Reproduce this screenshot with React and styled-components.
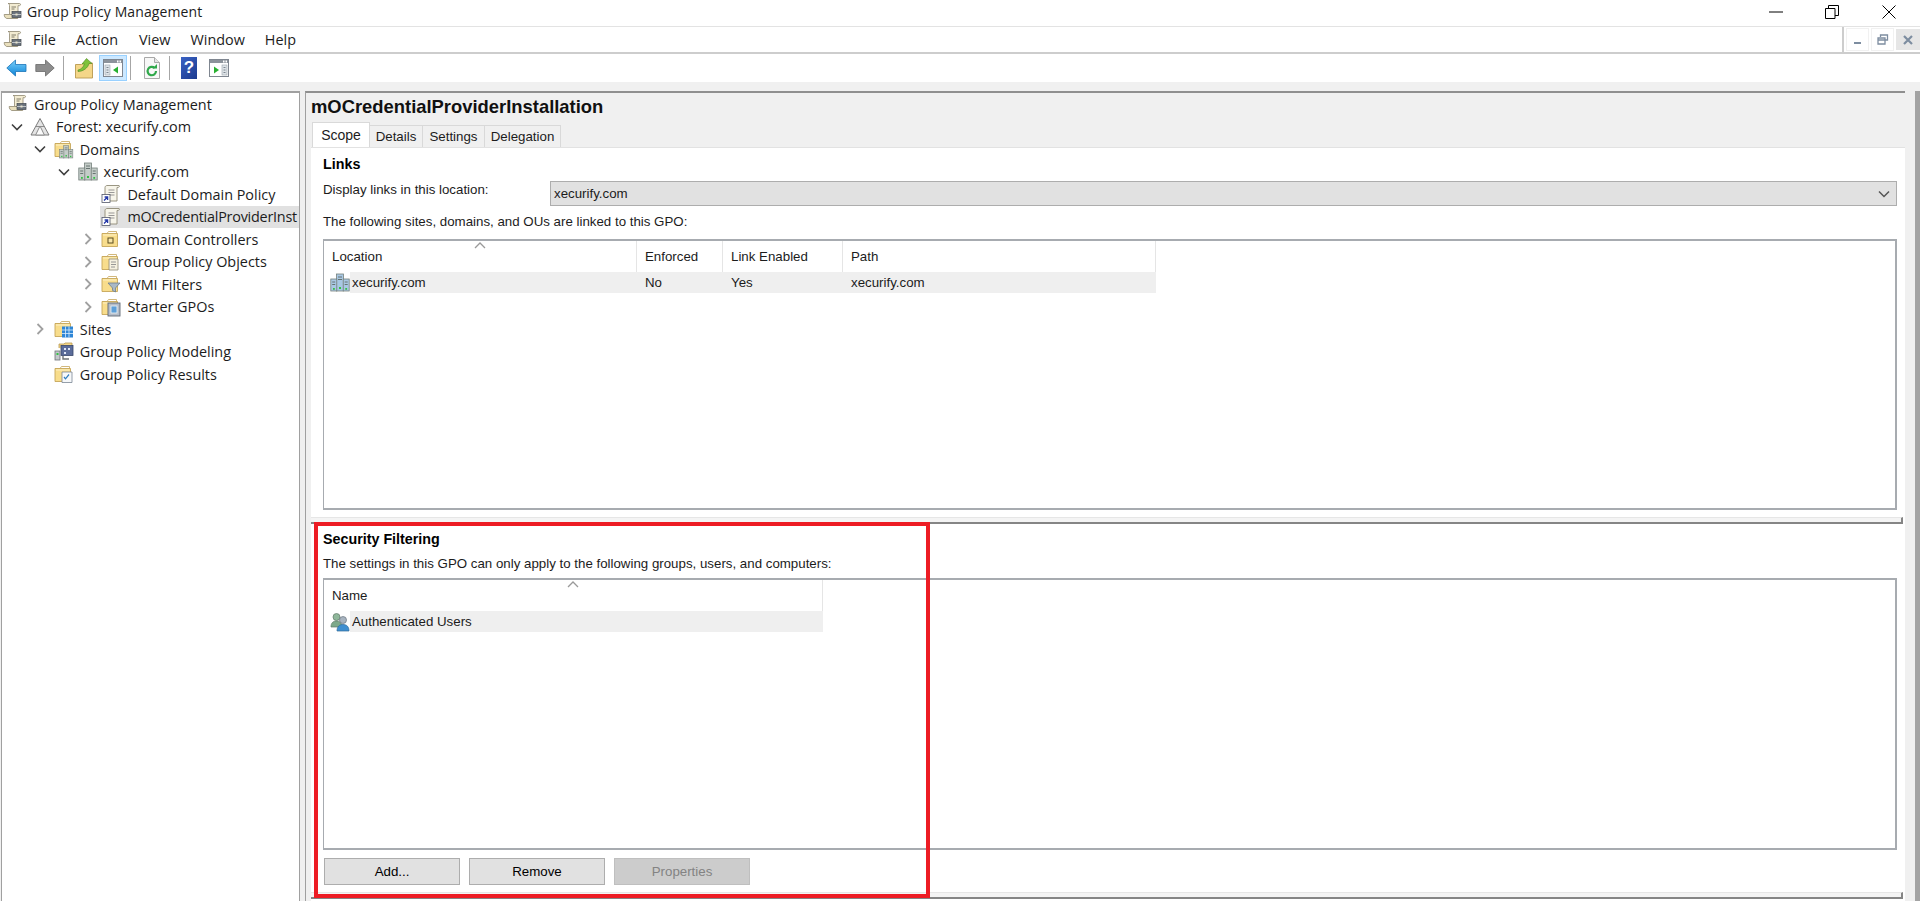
import React from "react";
import styled, { createGlobalStyle } from "styled-components";

const GlobalStyle = createGlobalStyle`
  html, body {
    margin: 0;
    padding: 0;
    height: 100%;
    overflow: hidden;
    background: #f0f0f0;
  }
`;

/* ---------- icons ---------- */

const ScrollIcon = () => (
  <svg width="20" height="20" viewBox="0 0 20 20">
    <path d="M5 1.500h11.500c1.200 0 1.500 1.800 0 2.200H15v9H6.500V3.500C6.500 2.400 6 1.500 5 1.500z" fill="#f3ecd2" stroke="#8f8870" strokeWidth="0.8" />
    <path d="M6.500 12.500H1.200c0 2 1 3.500 2.500 4h11v-4z" fill="#e9dfbc" stroke="#8f8870" strokeWidth="0.8" />
    <path d="M8.500 5h4.500M8.500 7h3" stroke="#77725f" strokeWidth="0.9" />
    <rect x="9" y="9.500" width="9" height="6" fill="#6b737c" stroke="#3f464d" strokeWidth="0.7" />
    <path d="M9 12.500h9" stroke="#c9ced3" strokeWidth="0.9" />
    <rect x="12.500" y="11.500" width="2" height="2" fill="#e8e4cc" />
  </svg>
);

const ForestIcon = () => (
  <svg width="20" height="20" viewBox="0 0 20 20">
    <path d="M10 1.500L19 18H1z" fill="#e4e4e4" stroke="#7b7b7b" strokeWidth="1" />
    <path d="M10 9l4.400 9H5.600z" fill="#fbfbfb" stroke="#8c8c8c" strokeWidth="1" />
    <path d="M5.800 9.500h8.400" stroke="#8c8c8c" strokeWidth="1" />
  </svg>
);

const ServerGlyph = ({ x = 0, y = 0, scale = 1, tint = "#c4ccc8" }) => (
  <g transform={`translate(${x} ${y}) scale(${scale})`}>
    <rect x="6.500" y="1" width="7" height="17" fill={tint} stroke="#75807c" strokeWidth="0.8" />
    <rect x="0.8" y="6" width="6" height="12" fill={tint} stroke="#75807c" strokeWidth="0.8" />
    <rect x="13.200" y="6" width="6" height="12" fill={tint} stroke="#75807c" strokeWidth="0.8" />
    <path d="M8 4h4M8 6.500h4M2.200 9h3M14.700 9h3M2.200 11.500h3M14.700 11.500h3" stroke="#5e6a66" strokeWidth="0.9" />
    <rect x="9" y="14" width="2" height="2" fill="#34c245" />
    <rect x="3" y="15" width="1.800" height="1.800" fill="#34c245" />
    <rect x="15.300" y="15" width="1.800" height="1.800" fill="#34c245" />
  </g>
);

const ServerIcon = ({ tint }) => (
  <svg width="20" height="20" viewBox="0 0 20 20">
    <ServerGlyph tint={tint} />
  </svg>
);

const FolderIcon = ({ children }) => (
  <svg width="20" height="20" viewBox="0 0 20 20">
    <path d="M1 4.500h5l1.500-2h8v3" fill="#fff" stroke="#c6a65a" strokeWidth="0.8" />
    <path d="M1 4.500h15.500v13H1z" fill="#f8dd8c" stroke="#c6a65a" strokeWidth="0.9" />
    <path d="M2 6h13.500" stroke="#fdf0c4" strokeWidth="1" />
    {children}
  </svg>
);

const GpoIcon = () => (
  <svg width="20" height="20" viewBox="0 0 20 20">
    <path d="M6 1.500h12c.6 0 .8 1.600-.5 1.800L16 3.500V17H4V3.500C4 2.400 5 1.500 6 1.500z" fill="#f7f5ea" stroke="#8f8a76" strokeWidth="0.9" />
    <path d="M7.500 6h6M7.500 8.500h6M7.500 11h6" stroke="#8d8d8d" strokeWidth="0.9" />
    <rect x="1" y="10.500" width="8" height="8" fill="#fff" stroke="#53586a" strokeWidth="0.8" />
    <path d="M3 16.500l3-3M3.600 13h3v3" fill="none" stroke="#2438a8" strokeWidth="1.300" />
  </svg>
);

const UpFolderIcon = () => (
  <svg width="18" height="22" viewBox="0 0 18 22">
    <path d="M0.500 7.500h6l1.500-1.500h9.500v15H.5z" fill="#f4d688" stroke="#b99a50" strokeWidth="0.9" />
    <path d="M3 13c3-.5 5-2.500 6.500-6H7l4.500-5.500L17 6.500h-3C13 11 8 14.500 3 14.500z" fill="#7ec23c" stroke="#4d8a22" strokeWidth="0.6" />
  </svg>
);

const PaneIcon = ({ side }) => (
  <svg width="20" height="18" viewBox="0 0 20 18">
    <rect x="0.500" y="0.500" width="19" height="17" fill="#fff" stroke="#7f8690" />
    <rect x="1" y="1" width="18" height="3" fill="#8c939b" />
    <rect x="14" y="1.500" width="1.500" height="2" fill="#fff" />
    <rect x="16.500" y="1.500" width="1.500" height="2" fill="#fff" />
    {side === "left" ? (
      <>
        <rect x="2" y="6" width="5" height="10" fill="#dfe4e8" stroke="#9aa3ab" strokeWidth="0.6" />
        <path d="M3.500 8.500h2M3.500 11h2M3.500 13.500h2" stroke="#7c8690" />
        <path d="M15 7.500v7l-5-3.500z" fill="#28b030" />
      </>
    ) : (
      <>
        <rect x="13" y="6" width="5" height="10" fill="#dfe4e8" stroke="#9aa3ab" strokeWidth="0.6" />
        <path d="M14.500 8.500h2M14.500 11h2M14.500 13.500h2" stroke="#7c8690" />
        <path d="M5 7.500v7l5-3.500z" fill="#28b030" />
      </>
    )}
  </svg>
);

const BackArrow = () => (
  <svg width="21" height="18" viewBox="0 0 21 18">
    <defs>
      <linearGradient id="backFill" x1="0" y1="0" x2="0" y2="1">
        <stop offset="0" stopColor="#7cd0fa" />
        <stop offset="1" stopColor="#0c84d8" />
      </linearGradient>
    </defs>
    <path d="M9.500 1L.8 9l8.700 8v-4.500H20v-7H9.500z" fill="url(#backFill)" stroke="#1a74b8" strokeWidth="0.8" />
  </svg>
);

const ForwardArrow = () => (
  <svg width="20" height="18" viewBox="0 0 20 18">
    <path d="M10.500 1L19.200 9l-8.700 8v-4.500H.8v-7h9.700z" fill="#8d8d8d" stroke="#6a6a6a" strokeWidth="0.8" />
  </svg>
);

const RefreshDocIcon = () => (
  <svg width="16" height="22" viewBox="0 0 16 22">
    <path d="M.5.5h10l5 5v16H.5z" fill="#f7f7f7" stroke="#a8a8a8" />
    <path d="M10.500.5v5h5" fill="#e4e4e4" stroke="#a8a8a8" />
    <path d="M12 14a4.200 4.200 0 1 1-1.300-3" fill="none" stroke="#2fa84a" strokeWidth="2.200" />
    <path d="M8.500 11.500h4.500V7z" fill="#2fa84a" />
  </svg>
);

const Chevron = ({ open }) =>
  open ? (
    <svg width="14" height="14" viewBox="0 0 14 14">
      <path d="M2 4.500l5 5 5-5" fill="none" stroke="#404040" strokeWidth="1.600" />
    </svg>
  ) : (
    <svg width="14" height="14" viewBox="0 0 14 14">
      <path d="M4.500 2l5 5-5 5" fill="none" stroke="#a0a0a0" strokeWidth="1.800" />
    </svg>
  );

const UsersIcon = () => (
  <svg width="20" height="20" viewBox="0 0 20 20">
    <circle cx="6.500" cy="5" r="3.500" fill="#8fb79a" stroke="#607a68" strokeWidth="0.7" />
    <path d="M1 15c0-4 2-6 5.500-6S12 11 12 15z" fill="#7da98a" stroke="#607a68" strokeWidth="0.7" />
    <circle cx="13" cy="8" r="3.500" fill="#a8b4c0" stroke="#6a7480" strokeWidth="0.7" />
    <path d="M7 19c0-4 2-6.500 6-6.500s6 2.500 6 6.500z" fill="#3f8fd0" stroke="#2f6a9a" strokeWidth="0.7" />
  </svg>
);

const SortCaret = () => (
  <svg width="12" height="7" viewBox="0 0 12 7">
    <path d="M1 6l5-5 5 5" fill="none" stroke="#9a9a9a" strokeWidth="1.300" />
  </svg>
);

const glyphs = {
  controllers: <rect x="7" y="9" width="5" height="5" fill="#f8e6a8" stroke="#5a4c20" strokeWidth="1" />,
  objects: (
    <>
      <path d="M8 7h9v11H8z" fill="#f5f1e0" stroke="#8f8a76" strokeWidth="0.8" />
      <path d="M10 10h5M10 12.500h5M10 15h4" stroke="#8d8d8d" strokeWidth="0.9" />
    </>
  ),
  wmi: <path d="M7 9h12l-4.500 5v4l-3-1.500V14z" fill="#a9b8c6" stroke="#6f7f8d" strokeWidth="0.8" />,
  starter: (
    <>
      <rect x="7" y="6" width="12" height="13" fill="#b4bcc8" stroke="#5f6874" strokeWidth="0.9" />
      <rect x="10" y="9" width="6" height="7" fill="#5d9fd8" stroke="#f0f4f8" strokeWidth="0.8" />
    </>
  ),
  sites: (
    <>
      <rect x="8" y="7.500" width="11" height="11" fill="#2f86d6" />
      <path d="M8 11h11M8 14.500h11M11.500 7.500v11M15 7.500v11" stroke="#d8ecfb" strokeWidth="0.8" />
    </>
  ),
  results: (
    <>
      <path d="M8 8h10v10.500H8z" fill="#f6f8fa" stroke="#7b8794" strokeWidth="0.8" />
      <path d="M10 13l1.500 1.800L15 10.500" fill="none" stroke="#2f7dc0" strokeWidth="1.200" />
    </>
  ),
};

const ModelingIcon = () => (
  <svg width="20" height="20" viewBox="0 0 20 20">
    <path d="M5 6V2h5l1-1h7v8" fill="#f4d688" stroke="#b99a50" strokeWidth="0.8" />
    <rect x="7" y="3.500" width="12" height="10" fill="#5b6c9a" stroke="#39466a" strokeWidth="0.8" />
    <path d="M10 6h2v2h-2zM14 6h2v2h-2zM10 10h2v2h-2z" fill="#dfe6f4" />
    <rect x="1" y="9" width="5" height="9" fill="#c4c8cc" stroke="#6d7276" strokeWidth="0.8" />
    <rect x="2.500" y="11" width="2" height="2" fill="#34c245" />
    <path d="M9 14v3h6" fill="none" stroke="#6d7276" strokeWidth="1.400" />
  </svg>
);

/* ---------- window chrome ---------- */

const Window = styled.div`
  width: 1920px;
  height: 901px;
  display: flex;
  flex-direction: column;
  background: #f0f0f0;
  color: #1c1c1c;
  font-family: "Open Sans", "Liberation Sans", sans-serif;
  overflow: hidden;
`;

const TitleBar = styled.div`
  height: 26px;
  flex: none;
  box-sizing: border-box;
  display: flex;
  align-items: center;
  background: #fff;
  padding: 0 0 3px 3px;
  font-size: 14px;
  letter-spacing: 0.1px;
`;

const TitleText = styled.span`
  margin-left: 4px;
`;

const WindowButtons = styled.div`
  margin-left: auto;
  display: flex;
  padding-right: 3px;
`;

const WindowButton = styled.div`
  width: 56.5px;
  height: 22px;
  display: flex;
  align-items: center;
  justify-content: center;
`;

const MenuBar = styled.div`
  height: 25px;
  flex: none;
  display: flex;
  align-items: center;
  background: #fff;
  padding-left: 3px;
  border-top: 1px solid #e3e3e3;
  border-bottom: 2px solid #cdcdcd;
  font-size: 14.400px;
`;

const MenuItem = styled.span`
  margin-left: ${(props) => props.$ml}px;
`;

const MdiButtons = styled.div`
  margin-left: auto;
  align-self: stretch;
  display: flex;
  align-items: center;
  gap: 2px;
  padding-left: 2px;
  border-left: 2px solid #cdcdcd;
`;

const MdiButton = styled.div`
  width: ${(props) => (props.$close ? 24 : 21)}px;
  height: 21px;
  display: flex;
  align-items: center;
  justify-content: center;
  border: ${(props) => (props.$close ? "none" : "1px solid #f1f1f1")};
  background: ${(props) => (props.$close ? "#e6e6e6" : "#fff")};
`;

const ToolBar = styled.div`
  height: 28px;
  flex: none;
  display: flex;
  align-items: center;
  background: #fff;
`;

const ToolItem = styled.div`
  margin-left: ${(props) => props.$ml}px;
  display: flex;
  align-items: center;
  justify-content: center;
`;

const ToolActive = styled(ToolItem)`
  width: 28px;
  height: 26px;
  box-sizing: border-box;
  background: #cce8ff;
  border: 1px solid #99d1ff;
`;

const ToolSep = styled(ToolItem)`
  width: 1px;
  height: 24px;
  background: #a6a6a6;
`;

const HelpBox = styled.div`
  width: 16px;
  height: 22px;
  display: flex;
  align-items: center;
  justify-content: center;
  background: linear-gradient(135deg, #3a62c4, #1c3a8e);
  color: #fff;
  font: bold 17px "Liberation Sans", sans-serif;
`;

const Main = styled.div`
  flex: 1;
  min-height: 0;
  display: flex;
  margin-top: 9px;
`;

/* ---------- tree ---------- */

const TreePane = styled.div`
  width: 299px;
  flex: none;
  box-sizing: border-box;
  margin-left: 1px;
  background: #fff;
  border: 1px solid #a0a0a0;
  border-width: 2px 1px 0 1px;
  overflow: hidden;
  font-size: 14.400px;
`;

const TreeRow = styled.div`
  height: 22.500px;
  display: flex;
  align-items: center;
  padding-left: ${(props) => (props.$level ? 7 + (props.$level - 1) * 23.8 : 0)}px;
`;

const CaretSlot = styled.div`
  width: ${(props) => (props.$level ? 15 : 0)}px;
  flex: none;
  display: flex;
  justify-content: center;
`;

const TreeContent = styled.div`
  flex: 1;
  min-width: 0;
  height: 22px;
  margin-left: 5px;
  padding-left: 1px;
  display: flex;
  align-items: center;
  gap: 6px;
  background: ${(props) => (props.$selected ? "#e1e1e1" : "transparent")};
`;

const TreeLabel = styled.span`
  white-space: nowrap;
  letter-spacing: ${(props) => (props.$selected ? "-0.24px" : "normal")};
`;

const IconSlot = styled.span`
  display: flex;
  flex: none;
`;

const TreeItem = ({ level, open, closed, selected, icon, children }) => (
  <TreeRow $level={level}>
    <CaretSlot $level={level}>
      {open && <Chevron open />}
      {closed && <Chevron />}
    </CaretSlot>
    <TreeContent $selected={selected}>
      <IconSlot>{icon}</IconSlot>
      <TreeLabel $selected={selected}>{children}</TreeLabel>
    </TreeContent>
  </TreeRow>
);

/* ---------- right side ---------- */

const Gutter = styled.div`
  width: 5px;
  flex: none;
`;

const DetailPane = styled.div`
  flex: 1;
  min-width: 0;
  display: flex;
  flex-direction: column;
  border-left: 1px solid #a0a0a0;
  border-top: 2px solid #8f8f8f;
  padding-left: 5px;
  font: 13.300px "Liberation Sans", sans-serif;
`;

const PolicyName = styled.h1`
  margin: 0;
  height: 30px;
  font: bold 18.400px/28px "Liberation Sans", sans-serif;
  color: #111;
`;

const TabStrip = styled.div`
  display: flex;
  align-items: flex-end;
  height: 24px;
`;

const Tab = styled.div`
  height: ${(props) => (props.$active ? 25 : 22)}px;
  width: ${(props) => props.$w}px;
  box-sizing: border-box;
  display: flex;
  align-items: center;
  justify-content: center;
  background: ${(props) => (props.$active ? "#fff" : "#f0f0f0")};
  border: 1px solid #d9d9d9;
  border-bottom: none;
  margin-left: -1px;
  font-size: ${(props) => (props.$active ? 14 : 13.3)}px;
  &:first-child {
    margin-left: 1px;
  }
`;

const TabPanel = styled.div`
  flex: 1;
  min-height: 0;
  display: flex;
  flex-direction: column;
  background: #fff;
  border-top: 1px solid #e2e2e2;
`;

const Section = styled.section`
  position: relative;
  display: flex;
  flex-direction: column;
  height: ${(props) => props.$h}px;
  padding: 0 8px 0 12px;
  box-sizing: border-box;
`;

const Heading = styled.h2`
  margin: ${(props) => props.$mt}px 0 0;
  font: bold 14.300px/16px "Liberation Sans", sans-serif;
  color: #000;
`;

const LocationRow = styled.div`
  display: flex;
  align-items: center;
  margin-top: 9px;
  height: 25px;
`;

const FieldLabel = styled.div`
  width: 227px;
  flex: none;
  padding-bottom: 9px;
`;

const Combo = styled.div`
  flex: 1;
  height: 25px;
  box-sizing: border-box;
  display: flex;
  align-items: center;
  justify-content: space-between;
  padding: 0 6px 0 3px;
  background: #e1e1e1;
  border: 1px solid #adadad;
`;

const Caption = styled.div`
  margin-top: ${(props) => props.$mt}px;
  line-height: 16px;
`;

const ListView = styled.div`
  margin-top: ${(props) => props.$mt}px;
  height: ${(props) => props.$h}px;
  box-sizing: border-box;
  background: #fff;
  border: 1px solid #a7abb0;
  border-width: 2px 2px 2px 1px;
`;

const ListHeader = styled.div`
  display: grid;
  grid-template-columns: ${(props) => props.$cols};
  height: 31px;
`;

const HeaderCell = styled.div`
  position: relative;
  display: flex;
  align-items: center;
  padding-left: 8px;
  border-right: 1px solid #e5e5e5;
`;

const SortMark = styled.span`
  position: absolute;
  top: 1px;
  left: 50%;
  margin-left: -6px;
  display: flex;
`;

const ListRow = styled.div`
  display: grid;
  grid-template-columns: ${(props) => props.$cols};
  height: 21px;
`;

const NameCell = styled.div`
  display: flex;
  align-items: center;
  padding-left: 6px;
`;

const NameText = styled.span`
  flex: 1;
  align-self: stretch;
  display: flex;
  align-items: center;
  padding-left: 2px;
  background: #efefef;
`;

const Cell = styled.div`
  display: flex;
  align-items: center;
  padding-left: 8px;
  background: #efefef;
`;

const ButtonRow = styled.div`
  display: flex;
  gap: 9px;
  margin-top: 8px;
  padding-left: 1px;
`;

const Button = styled.button`
  width: 136px;
  height: 27px;
  padding: 0;
  font: 13.300px "Liberation Sans", sans-serif;
  color: ${(props) => (props.disabled ? "#838383" : "#000")};
  background: ${(props) => (props.disabled ? "#cccccc" : "#e1e1e1")};
  border: 1px solid ${(props) => (props.disabled ? "#bfbfbf" : "#adadad")};
`;

const Splitter = styled.div`
  height: 7px;
  flex: none;
  box-sizing: border-box;
  background: #f4f4f4;
  border-top: 1px solid #e6e6e6;
  border-bottom: 2px solid #858585;
  border-right: 2px solid #858585;
  margin-right: 2px;
`;

const Highlight = styled.div`
  position: absolute;
  left: 3px;
  top: -2px;
  width: 616px;
  height: 376px;
  box-sizing: border-box;
  border: 4px solid #ed1c24;
  pointer-events: none;
  z-index: 2;
`;

const ScrollTrack = styled.div`
  width: 15px;
  flex: none;
  box-sizing: border-box;
  background: #f0f0f0;
  border-right: 5px solid #a3a3a3;
`;

const linkCols = "313px 86px 120px 313px";
const securityCols = "499px";

export default function App() {
  return (
    <Window>
      <GlobalStyle />
      <TitleBar>
        <ScrollIcon />
        <TitleText>Group Policy Management</TitleText>
        <WindowButtons>
          <WindowButton>
            <svg width="14" height="2" viewBox="0 0 14 2">
              <path d="M0 1h14" stroke="#000" />
            </svg>
          </WindowButton>
          <WindowButton>
            <svg width="14" height="14" viewBox="0 0 14 14">
              <path d="M.5 3.500h9.500V13.500H.5z M3.500 3.500V.5h10v10h-3.500" fill="none" stroke="#000" />
            </svg>
          </WindowButton>
          <WindowButton>
            <svg width="14" height="14" viewBox="0 0 14 14">
              <path d="M.5.5l13 13M13.500.5l-13 13" stroke="#000" />
            </svg>
          </WindowButton>
        </WindowButtons>
      </TitleBar>
      <MenuBar>
        <ScrollIcon />
        <MenuItem $ml={10}>File</MenuItem>
        <MenuItem $ml={20}>Action</MenuItem>
        <MenuItem $ml={21}>View</MenuItem>
        <MenuItem $ml={20}>Window</MenuItem>
        <MenuItem $ml={20}>Help</MenuItem>
        <MdiButtons>
          <MdiButton>
            <svg width="10" height="10" viewBox="0 0 10 10">
              <path d="M1 8h7" stroke="#7d8da0" strokeWidth="2" />
            </svg>
          </MdiButton>
          <MdiButton>
            <svg width="12" height="12" viewBox="0 0 12 12">
              <path d="M3.500 3V1h7v5H8M1 4h7v6H1zM1 6h7" fill="none" stroke="#7d8da0" strokeWidth="1.300" />
            </svg>
          </MdiButton>
          <MdiButton $close>
            <svg width="10" height="10" viewBox="0 0 10 10">
              <path d="M1 1l8 8M9 1L1 9" stroke="#7d8da0" strokeWidth="2.200" />
            </svg>
          </MdiButton>
        </MdiButtons>
      </MenuBar>
      <ToolBar>
        <ToolItem $ml={6}><BackArrow /></ToolItem>
        <ToolItem $ml={8}><ForwardArrow /></ToolItem>
        <ToolSep $ml={8} />
        <ToolItem $ml={11}><UpFolderIcon /></ToolItem>
        <ToolActive $ml={6}><PaneIcon side="left" /></ToolActive>
        <ToolSep $ml={3} />
        <ToolItem $ml={13}><RefreshDocIcon /></ToolItem>
        <ToolSep $ml={9} />
        <ToolItem $ml={11}><HelpBox>?</HelpBox></ToolItem>
        <ToolItem $ml={12}><PaneIcon side="right" /></ToolItem>
      </ToolBar>
      <Main>
        <TreePane>
          <TreeItem level={0} icon={<ScrollIcon />}>Group Policy Management</TreeItem>
          <TreeItem level={1} open icon={<ForestIcon />}>Forest: xecurify.com</TreeItem>
          <TreeItem level={2} open icon={<FolderIcon><ServerGlyph x={5} y={6} scale={0.72} /></FolderIcon>}>Domains</TreeItem>
          <TreeItem level={3} open icon={<ServerIcon />}>xecurify.com</TreeItem>
          <TreeItem level={4} icon={<GpoIcon />}>Default Domain Policy</TreeItem>
          <TreeItem level={4} selected icon={<GpoIcon />}>mOCredentialProviderInst</TreeItem>
          <TreeItem level={4} closed icon={<FolderIcon>{glyphs.controllers}</FolderIcon>}>Domain Controllers</TreeItem>
          <TreeItem level={4} closed icon={<FolderIcon>{glyphs.objects}</FolderIcon>}>Group Policy Objects</TreeItem>
          <TreeItem level={4} closed icon={<FolderIcon>{glyphs.wmi}</FolderIcon>}>WMI Filters</TreeItem>
          <TreeItem level={4} closed icon={<FolderIcon>{glyphs.starter}</FolderIcon>}>Starter GPOs</TreeItem>
          <TreeItem level={2} closed icon={<FolderIcon>{glyphs.sites}</FolderIcon>}>Sites</TreeItem>
          <TreeItem level={2} icon={<ModelingIcon />}>Group Policy Modeling</TreeItem>
          <TreeItem level={2} icon={<FolderIcon>{glyphs.results}</FolderIcon>}>Group Policy Results</TreeItem>
        </TreePane>
        <Gutter />
        <DetailPane>
          <PolicyName>mOCredentialProviderInstallation</PolicyName>
          <TabStrip>
            <Tab $active $w={58}>Scope</Tab>
            <Tab $w={54}>Details</Tab>
            <Tab $w={63}>Settings</Tab>
            <Tab $w={77}>Delegation</Tab>
          </TabStrip>
          <TabPanel>
            <Section $h={369}>
              <Heading $mt={8}>Links</Heading>
              <LocationRow>
                <FieldLabel>Display links in this location:</FieldLabel>
                <Combo>
                  xecurify.com
                  <svg width="12" height="8" viewBox="0 0 12 8">
                    <path d="M1 1.500l5 5 5-5" fill="none" stroke="#555" strokeWidth="1.500" />
                  </svg>
                </Combo>
              </LocationRow>
              <Caption $mt={8}>The following sites, domains, and OUs are linked to this GPO:</Caption>
              <ListView $mt={9} $h={271}>
                <ListHeader $cols={linkCols}>
                  <HeaderCell>
                    Location
                    <SortMark><SortCaret /></SortMark>
                  </HeaderCell>
                  <HeaderCell>Enforced</HeaderCell>
                  <HeaderCell>Link Enabled</HeaderCell>
                  <HeaderCell>Path</HeaderCell>
                </ListHeader>
                <ListRow $cols={linkCols}>
                  <NameCell>
                    <ServerIcon tint="#a9c8e4" />
                    <NameText>xecurify.com</NameText>
                  </NameCell>
                  <Cell>No</Cell>
                  <Cell>Yes</Cell>
                  <Cell>xecurify.com</Cell>
                </ListRow>
              </ListView>
            </Section>
            <Splitter />
            <Section $h={368}>
              <Highlight />
              <Heading $mt={7}>Security Filtering</Heading>
              <Caption $mt={9}>The settings in this GPO can only apply to the following groups, users, and computers:</Caption>
              <ListView $mt={6} $h={272}>
                <ListHeader $cols={securityCols}>
                  <HeaderCell>
                    Name
                    <SortMark><SortCaret /></SortMark>
                  </HeaderCell>
                </ListHeader>
                <ListRow $cols={securityCols}>
                  <NameCell>
                    <UsersIcon />
                    <NameText>Authenticated Users</NameText>
                  </NameCell>
                </ListRow>
              </ListView>
              <ButtonRow>
                <Button>Add...</Button>
                <Button>Remove</Button>
                <Button disabled>Properties</Button>
              </ButtonRow>
            </Section>
            <Splitter />
          </TabPanel>
        </DetailPane>
        <ScrollTrack />
      </Main>
    </Window>
  );
}
